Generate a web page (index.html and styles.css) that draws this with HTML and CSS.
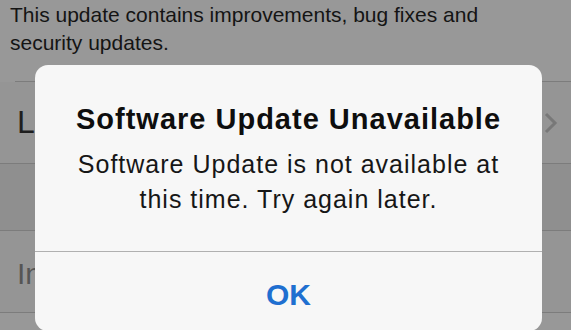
FILE: index.html
```html
<!DOCTYPE html>
<html>
<head>
<meta charset="utf-8">
<link rel="stylesheet" href="styles.css">
</head>
<body>
<div class="screen">
  <p class="intro">This update contains improvements, bug fixes and security updates.</p>
  <div class="sep inset"></div>
  <div class="row row-tall">
    <span class="row-label">L</span>
    <svg class="chev" width="14" height="22" viewBox="0 0 14 22"><path d="M2 2 L11 11 L2 20" fill="none" stroke="#787878" stroke-width="3"/></svg>
  </div>
  <div class="sep"></div>
  <div class="row row-blank"></div>
  <div class="sep"></div>
  <div class="row row-tall">
    <span class="row-label dim">Install Now</span>
  </div>
  <div class="sep"></div>
</div>
<div class="alert">
  <div class="alert-text">
    <h1 class="alert-title">Software Update Unavailable</h1>
    <p class="alert-msg">Software Update is not available at<br>this time. Try again later.</p>
  </div>
  <div class="alert-divider"></div>
  <div class="alert-btn">OK</div>
</div>
</body>
</html>
```
FILE: styles.css
```css
html, body {
  margin: 0;
  padding: 0;
}
body {
  width: 571px;
  height: 330px;
  overflow: hidden;
  background: #989898;
  font-family: "Liberation Sans", Arial, sans-serif;
  position: relative;
}
.screen {
  display: flex;
  flex-direction: column;
}
.intro {
  margin: 0;
  padding: 1px 0 24px 10px;
  font-size: 21px;
  line-height: 28px;
  color: #141414;
  width: 480px;
}
.sep {
  height: 1px;
  background: #7c7c7c;
}
.sep.inset {
  margin-left: 15px;
}
.row {
  display: flex;
  align-items: center;
  justify-content: space-between;
  padding: 0 13px 0 17px;
  background: #959595;
}
.row-tall {
  height: 81px;
}
.row-blank {
  height: 66px;
  background: #8f8f8f;
}
.row-label {
  font-size: 32px;
  color: #1e1e1e;
  white-space: nowrap;
}
.row-label.dim {
  font-size: 30px;
  color: #555;
  padding-top: 4px;
}
.chev {
  display: block;
}
.alert {
  position: absolute;
  left: 35px;
  top: 65px;
  width: 507px;
  height: 266px;
  border-radius: 13px;
  background: #f7f7f7;
  display: flex;
  flex-direction: column;
  overflow: hidden;
}
.alert-text {
  padding-top: 37px;
  text-align: center;
}
.alert-title {
  margin: 0;
  font-size: 29px;
  line-height: 34px;
  font-weight: bold;
  letter-spacing: 1px;
  color: #0e0e0e;
}
.alert-msg {
  margin: 11px 0 34px;
  font-size: 25px;
  line-height: 35px;
  letter-spacing: 1px;
  color: #161616;
}
.alert-divider {
  height: 1px;
  background: #b0b0b0;
}
.alert-btn {
  padding-top: 28px;
  text-align: center;
  font-size: 30px;
  line-height: 30px;
  font-weight: bold;
  color: #1f6fd0;
}
```
